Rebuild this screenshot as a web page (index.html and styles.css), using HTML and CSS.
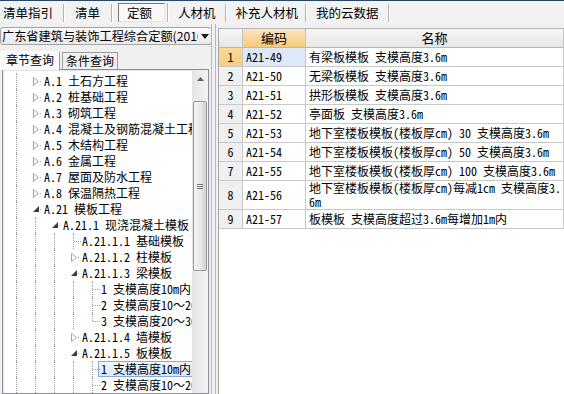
FILE: index.html
```html
<!DOCTYPE html>
<html lang="zh-CN">
<head>
    <meta charset="UTF-8">
    <title>定额</title>
    <link rel="stylesheet" href="styles.css">
</head>
<body>
    <div class="topbar">
        <div class="tab first">清单指引</div>
        <div class="tab t-list">清单</div>
        <div class="tab active"><span>定额</span></div>
        <div class="tab">人材机</div>
        <div class="tab t-extra">补充人材机</div>
        <div class="tab">我的云数据</div>
    </div>

    <div class="main">
        <div class="side">
            <div class="combo">
                <span class="combo-text">广东省建筑与装饰工程综合定额(2010)</span>
                <svg class="combo-arrow" width="8" height="5"><path d="M0 0 L8 0 L4 5 Z" fill="#1a1a1a"/></svg>
            </div>

            <div class="side-tabs">
                <div class="stab on">章节查询</div>
                <div class="stab">条件查询</div>
            </div>

            <div class="tree-box">
                <div class="tree">
                    <!-- level 0 -->
                    <div class="node"><i class="g"></i><i class="x"><svg class="closed" width="6" height="9"><path d="M0.5 0.5 L5.5 4.5 L0.5 8.5 Z" fill="#fff" stroke="#a6a6a6"/></svg></i><span class="t">A.1 土石方工程</span></div>
                    <div class="node"><i class="g"></i><i class="x"><svg class="closed" width="6" height="9"><path d="M0.5 0.5 L5.5 4.5 L0.5 8.5 Z" fill="#fff" stroke="#a6a6a6"/></svg></i><span class="t">A.2 桩基础工程</span></div>
                    <div class="node"><i class="g"></i><i class="x"><svg class="closed" width="6" height="9"><path d="M0.5 0.5 L5.5 4.5 L0.5 8.5 Z" fill="#fff" stroke="#a6a6a6"/></svg></i><span class="t">A.3 砌筑工程</span></div>
                    <div class="node"><i class="g"></i><i class="x"><svg class="closed" width="6" height="9"><path d="M0.5 0.5 L5.5 4.5 L0.5 8.5 Z" fill="#fff" stroke="#a6a6a6"/></svg></i><span class="t">A.4 混凝土及钢筋混凝土工程</span></div>
                    <div class="node"><i class="g"></i><i class="x"><svg class="closed" width="6" height="9"><path d="M0.5 0.5 L5.5 4.5 L0.5 8.5 Z" fill="#fff" stroke="#a6a6a6"/></svg></i><span class="t">A.5 木结构工程</span></div>
                    <div class="node"><i class="g"></i><i class="x"><svg class="closed" width="6" height="9"><path d="M0.5 0.5 L5.5 4.5 L0.5 8.5 Z" fill="#fff" stroke="#a6a6a6"/></svg></i><span class="t">A.6 金属工程</span></div>
                    <div class="node"><i class="g"></i><i class="x"><svg class="closed" width="6" height="9"><path d="M0.5 0.5 L5.5 4.5 L0.5 8.5 Z" fill="#fff" stroke="#a6a6a6"/></svg></i><span class="t">A.7 屋面及防水工程</span></div>
                    <div class="node"><i class="g"></i><i class="x"><svg class="closed" width="6" height="9"><path d="M0.5 0.5 L5.5 4.5 L0.5 8.5 Z" fill="#fff" stroke="#a6a6a6"/></svg></i><span class="t">A.8 保温隔热工程</span></div>
                    <div class="node"><i class="g"></i><i class="x"><svg class="open" width="6" height="6"><path d="M6 0 L6 6 L0 6 Z" fill="#3c3c3c"/></svg></i><span class="t">A.21 模板工程</span></div>
                    <!-- level 1 -->
                    <div class="node"><i class="g"></i><i class="g"></i><i class="x"><svg class="open" width="6" height="6"><path d="M6 0 L6 6 L0 6 Z" fill="#3c3c3c"/></svg></i><span class="t">A.21.1 现浇混凝土模板</span></div>
                    <!-- level 2 -->
                    <div class="node"><i class="g"></i><i class="g"></i><i class="g"></i><i class="x leaf"></i><span class="t">A.21.1.1 基础模板</span></div>
                    <div class="node"><i class="g"></i><i class="g"></i><i class="g"></i><i class="x"><svg class="closed" width="6" height="9"><path d="M0.5 0.5 L5.5 4.5 L0.5 8.5 Z" fill="#fff" stroke="#a6a6a6"/></svg></i><span class="t">A.21.1.2 柱模板</span></div>
                    <div class="node"><i class="g"></i><i class="g"></i><i class="g"></i><i class="x"><svg class="open" width="6" height="6"><path d="M6 0 L6 6 L0 6 Z" fill="#3c3c3c"/></svg></i><span class="t">A.21.1.3 梁模板</span></div>
                    <div class="node"><i class="g"></i><i class="g"></i><i class="g"></i><i class="g"></i><i class="x leaf"></i><span class="t">1 支模高度10m内</span></div>
                    <div class="node"><i class="g"></i><i class="g"></i><i class="g"></i><i class="g"></i><i class="x leaf"></i><span class="t">2 支模高度10～20m</span></div>
                    <div class="node"><i class="g"></i><i class="g"></i><i class="g"></i><i class="g"></i><i class="x leaf last"></i><span class="t">3 支模高度20～30m</span></div>
                    <div class="node"><i class="g"></i><i class="g"></i><i class="g"></i><i class="x"><svg class="closed" width="6" height="9"><path d="M0.5 0.5 L5.5 4.5 L0.5 8.5 Z" fill="#fff" stroke="#a6a6a6"/></svg></i><span class="t">A.21.1.4 墙模板</span></div>
                    <div class="node"><i class="g"></i><i class="g"></i><i class="g"></i><i class="x"><svg class="open" width="6" height="6"><path d="M6 0 L6 6 L0 6 Z" fill="#3c3c3c"/></svg></i><span class="t">A.21.1.5 板模板</span></div>
                    <div class="node"><i class="g"></i><i class="g"></i><i class="g"></i><i class="g"></i><i class="x leaf"></i><span class="t sel">1 支模高度10m内</span></div>
                    <div class="node"><i class="g"></i><i class="g"></i><i class="g"></i><i class="g"></i><i class="x leaf"></i><span class="t">2 支模高度10～20m</span></div>
                </div>

                <div class="vscroll">
                    <div class="sb-btn"><svg width="7" height="4"><path d="M0 4 L3.5 0 L7 4 Z" fill="#606060"/></svg></div>
                    <div class="sb-gap"></div>
                    <div class="thumb"><i></i><i></i><i></i></div>
                </div>
            </div>
        </div>

        <div class="splitter"></div>

        <div class="grid">
            <table class="list">
                <colgroup>
                    <col class="c-rn">
                    <col class="c-code">
                    <col>
                </colgroup>
                <thead>
                    <tr><th class="rn"></th><th class="code">编码</th><th>名称</th></tr>
                </thead>
                <tbody>
                    <tr class="sel"><td class="rn">1</td><td>A21-49</td><td>有梁板模板 支模高度3.6m</td></tr>
                    <tr><td class="rn">2</td><td>A21-50</td><td>无梁板模板 支模高度3.6m</td></tr>
                    <tr><td class="rn">3</td><td>A21-51</td><td>拱形板模板 支模高度3.6m</td></tr>
                    <tr><td class="rn">4</td><td>A21-52</td><td>亭面板 支模高度3.6m</td></tr>
                    <tr><td class="rn">5</td><td>A21-53</td><td>地下室楼板模板(楼板厚cm) 30 支模高度3.6m</td></tr>
                    <tr><td class="rn">6</td><td>A21-54</td><td>地下室楼板模板(楼板厚cm) 50 支模高度3.6m</td></tr>
                    <tr><td class="rn">7</td><td>A21-55</td><td>地下室楼板模板(楼板厚cm) 100 支模高度3.6m</td></tr>
                    <tr><td class="rn">8</td><td>A21-56</td><td class="wrap">地下室楼板模板(楼板厚cm)每减1cm 支模高度3.<br>6m</td></tr>
                    <tr><td class="rn">9</td><td>A21-57</td><td>板模板 支模高度超过3.6m每增加1m内</td></tr>
                </tbody>
            </table>
        </div>
    </div>
</body>
</html>
```

FILE: styles.css
```css
body {
    margin: 0;
    width: 564px;
    height: 394px;
    overflow: hidden;
    background: #f0f0f0;
    font-family: "Noto Sans CJK SC", "Noto Sans", sans-serif;
    color: #000;
}

/* top tab strip */
.topbar {
    height: 23px;
    display: flex;
    align-items: center;
    border-top: 1px solid #2b4766;
    background: #f2f2f2;
    font-size: 12.5px;
}
.tab {
    padding: 0 9px 0 10px;
    line-height: 18px;
    border-right: 1px solid #b4b4b4;
    box-shadow: 1px 0 0 #fff;
}
.tab.first {
    padding: 0 10px 0 3px;
}
.tab.t-list {
    padding: 0 11px;
}
.tab.t-extra {
    padding-right: 7px;
}
.tab.active {
    padding: 0 2px 0 6px;
}
.tab.active span {
    display: block;
    padding: 0 12px 0 8px;
    line-height: 17px;
    border: 1px solid;
    border-color: #7a7a7a #e4e4e4 #e4e4e4 #7a7a7a;
    background: #f8f8f8;
}

.main {
    display: flex;
    height: 370px;
}

/* left side */
.side {
    width: 211px;
    display: flex;
    flex-direction: column;
}
.combo {
    margin-top: 3px;
    width: 210px;
    height: 16px;
    display: flex;
    align-items: center;
    border: 1px solid #a3a3a3;
    border-radius: 3px;
    background: linear-gradient(#fdfdfd, #e9e9e9);
    font-size: 12.2px;
}
.combo-text {
    width: 196px;
    padding-left: 1px;
    overflow: hidden;
    white-space: nowrap;
    line-height: 16px;
}
.combo-arrow {
    margin-left: 3px;
}

.side-tabs {
    display: flex;
    align-items: flex-end;
    height: 21px;
    margin-top: 5px;
    font-size: 12px;
}
.stab {
    padding: 0 3px;
    line-height: 16px;
    border: 1px solid #9c9c9c;
    border-bottom: none;
    margin-left: 2px;
}
.stab.on {
    margin-left: 0;
    padding: 0 5px 2px 5px;
    background: #fafafa;
    border-color: #ffffff #9c9c9c #ffffff #ffffff;
    position: relative;
    top: 1px;
}

.tree-box {
    flex: 1;
    margin-left: 2px;
    width: 205px;
    display: flex;
    border: 1px solid #8a8f98;
    background: #fff;
    box-shadow: inset 1px 1px 0 #e2e2e2;
}
.tree {
    flex: 1;
    overflow: hidden;
    padding: 3px 0 0 4px;
    font-family: "Noto Sans Mono CJK SC", "Noto Sans CJK SC", monospace;
    font-size: 12px;
    white-space: nowrap;
}
.node {
    display: flex;
    height: 16px;
    align-items: center;
}
.g, .x {
    flex: none;
    height: 16px;
    position: relative;
}
.g {
    width: 19px;
}
.g::before {
    content: "";
    position: absolute;
    left: 9px;
    top: 0;
    bottom: 0;
    border-left: 1px dotted #a0a0a0;
}
.x {
    width: 15px;
}
.x::after {
    content: "";
    position: absolute;
    left: 14px;
    top: 8px;
    width: 1px;
    height: 1px;
    background: #a0a0a0;
}
.x svg {
    position: absolute;
    left: 7px;
}
.x svg.closed {
    top: 4px;
}
.x svg.open {
    top: 5px;
}
.x.leaf::before {
    content: "";
    position: absolute;
    left: 9px;
    top: 0;
    bottom: 0;
    border-left: 1px dotted #a0a0a0;
}
.x.leaf.last::before {
    bottom: 8px;
}
.x.leaf::after {
    left: 10px;
    width: 7px;
    height: 0;
    background: none;
    border-top: 1px dotted #a0a0a0;
}
.t {
    padding: 0 2px;
    border: 1px solid transparent;
    line-height: 14px;
}
.t.sel {
    border-color: #84acdd;
    background: linear-gradient(#eef5fd, #d9e8fb);
}

.vscroll {
    width: 16px;
    flex: none;
    display: flex;
    flex-direction: column;
    background: linear-gradient(to right, #e4e4e4, #f4f4f4);
}
.sb-btn {
    height: 17px;
    display: flex;
    align-items: center;
    justify-content: center;
}
.sb-gap {
    height: 14px;
}
.thumb {
    height: 168px;
    margin: 0 1px;
    border: 1px solid #9b9b9b;
    border-radius: 2px;
    background: linear-gradient(to right, #f4f4f4, #e8e8e8 55%, #d2d2d2);
    display: flex;
    flex-direction: column;
    align-items: center;
    justify-content: center;
    gap: 1px;
}
.thumb i {
    width: 6px;
    height: 1px;
    background: #7a7a7a;
}

.splitter {
    width: 3px;
    border-left: 1px solid #b8b8b8;
    border-right: 1px solid #b8b8b8;
    margin-right: 2px;
}

/* right grid */
.grid {
    flex: 1;
    margin-top: 4px;
    background: #fff;
    border-left: 1px solid #a8a8a8;
    border-top: 1px solid #b4b4b4;
    overflow: hidden;
}
.list {
    width: 100%;
    table-layout: fixed;
    border-collapse: separate;
    border-spacing: 0;
    font-family: "Noto Sans Mono CJK SC", "Noto Sans CJK SC", monospace;
    font-size: 12px;
}
.c-rn {
    width: 24px;
}
.c-code {
    width: 63px;
}
.list th {
    height: 18px;
    padding: 0;
    font-family: "Noto Sans CJK SC", sans-serif;
    font-size: 13px;
    font-weight: normal;
    line-height: 18px;
    background: linear-gradient(#f6f6f6, #e6e6e6);
    border-right: 1px solid #c4c4c4;
    border-bottom: 1px solid #b8b8b8;
}
.list th.code {
    background: linear-gradient(#fce6bc, #f6c97e);
}
.list td {
    padding: 0 3px;
    line-height: 18px;
    white-space: nowrap;
    overflow: hidden;
    border-right: 1px solid #c8c8c8;
    border-bottom: 1px solid #c8c8c8;
}
.list td.rn {
    padding: 0;
    text-align: center;
    background: #f0f0f0;
}
.list td.wrap {
    line-height: 14px;
}
.list tr.sel td.rn {
    background: linear-gradient(#fbd998, #f7cc80);
}
.list tr.sel td:nth-child(2) {
    background: #dde9f8;
}
```
